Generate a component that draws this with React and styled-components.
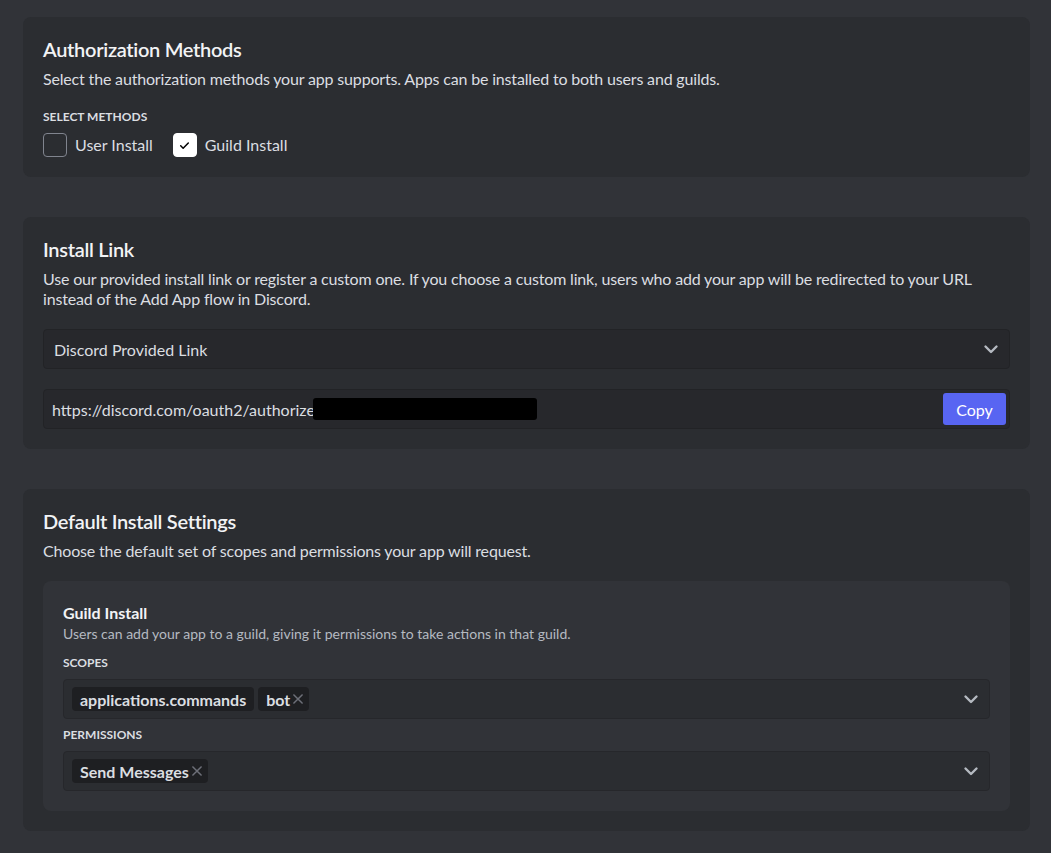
import React from 'react';
import styled, { createGlobalStyle } from 'styled-components';

const GlobalStyle = createGlobalStyle`
  html, body {
    margin: 0;
    background: #313338;
  }
  body {
    font-family: "Lato", "Noto Sans", sans-serif;
    color: #dbdee1;
  }
`;

const Page = styled.div`
  padding: 17px 21px 23px 23px;
  display: flex;
  flex-direction: column;
  gap: 40px;
`;

const Card = styled.section`
  background: #2b2d31;
  border-radius: 8px;
  padding: 20px;
`;

const Title = styled.h2`
  margin: 0 0 8px;
  font-size: 20px;
  line-height: 24px;
  font-weight: 600;
  letter-spacing: -0.3px;
  color: #f2f3f5;
`;

const Desc = styled.p`
  margin: 0;
  font-size: 16px;
  line-height: 20px;
  letter-spacing: -0.17px;
  color: #dbdee1;
`;

const Label = styled.div`
  font-size: 12px;
  line-height: 16px;
  font-weight: 700;
  text-transform: uppercase;
  color: #dbdee1;
  margin: ${p => p.$top || 0}px 0 ${p => p.$bottom || 8}px;
`;

const CheckRow = styled.div`
  display: flex;
  align-items: center;
  gap: 20px;
`;

const CheckItem = styled.label`
  display: flex;
  align-items: center;
  gap: 8px;
  font-size: 16px;
  line-height: 24px;
  color: #dbdee1;
`;

const Box = styled.span`
  width: 24px;
  height: 24px;
  box-sizing: border-box;
  border-radius: 4px;
  border: 1px solid ${p => (p.$checked ? '#ffffff' : '#80848e')};
  background: ${p => (p.$checked ? '#ffffff' : 'transparent')};
  display: flex;
  align-items: center;
  justify-content: center;
`;

const Field = styled.div`
  display: flex;
  align-items: center;
  box-sizing: border-box;
  height: 40px;
  background: ${p => (p.$nested ? '#2b2d31' : '#27282c')};
  border: 1px solid ${p => (p.$nested ? '#26272b' : '#222326')};
  border-radius: 4px;
  padding: ${p => p.$pad || '0 6px 0 10px'};
  margin-top: ${p => p.$top || 0}px;
  gap: 4px;
  font-size: 16px;
  color: #dbdee1;
`;

const Grow = styled.div`
  flex: 1;
  display: flex;
  align-items: center;
  gap: 4px;
  white-space: nowrap;
`;

const Redacted = styled.span`
  display: inline-block;
  width: 224px;
  height: 22px;
  background: #000;
  border-radius: 3px;
  margin-left: -13px;
`;

const CopyButton = styled.button`
  width: 63px;
  height: 32px;
  border: 0;
  border-radius: 3px;
  background: #5865f2;
  color: #fff;
  font-family: inherit;
  font-size: 16px;
  padding-bottom: 1px;
`;

const Inner = styled.div`
  background: #313338;
  border-radius: 8px;
  padding: 22px 20px 20px;
  margin-top: 20px;
`;

const SubTitle = styled.h3`
  margin: 0;
  font-size: 16px;
  line-height: 20px;
  font-weight: 700;
  color: #f2f3f5;
`;

const SmallDesc = styled.p`
  margin: 2px 0 0;
  font-size: 14px;
  line-height: 18px;
  color: #b5bac1;
`;

const Chip = styled.span`
  display: inline-flex;
  align-items: center;
  height: 24px;
  padding: 0 ${p => (p.$removable ? 4 : 8)}px 0 8px;
  border-radius: 4px;
  background: #1e1f22;
  font-size: 16px;
  font-weight: 700;
  color: #dbdee1;
  gap: 1px;
`;

const Chevron = () => (
  <svg width="24" height="24" viewBox="0 0 24 24" fill="none">
    <path d="M6.5 9.5l5.5 5.5 5.5-5.5" stroke="#b5bac1" strokeWidth="2.4" strokeLinecap="round" strokeLinejoin="round" />
  </svg>
);

const Cross = () => (
  <svg width="14" height="14" viewBox="0 0 24 24">
    <path d="M5 5l14 14M19 5L5 19" stroke="#6d6f78" strokeWidth="2.6" strokeLinecap="round" />
  </svg>
);

const Tag = ({ children, removable }) => (
  <Chip $removable={removable}>
    {children}
    {removable && <Cross />}
  </Chip>
);

export default function App() {
  return (
    <>
      <GlobalStyle />
      <Page>
        <Card>
          <Title>Authorization Methods</Title>
          <Desc>Select the authorization methods your app supports. Apps can be installed to both users and guilds.</Desc>
          <Label $top={20}>Select Methods</Label>
          <CheckRow>
            <CheckItem>
              <Box />
              User Install
            </CheckItem>
            <CheckItem>
              <Box $checked>
                <svg width="13" height="13" viewBox="0 0 24 24" fill="none">
                  <path d="M5 12.5l4.5 4.5L19 7.5" stroke="#000" strokeWidth="2.8" strokeLinecap="round" strokeLinejoin="round" />
                </svg>
              </Box>
              Guild Install
            </CheckItem>
          </CheckRow>
        </Card>

        <Card>
          <Title>Install Link</Title>
          <Desc>
            Use our provided install link or register a custom one. If you choose a custom link, users who add your app will be redirected to your URL instead of the Add App flow in Discord.
          </Desc>
          <Field $top={20}>
            <Grow>Discord Provided Link</Grow>
            <Chevron />
          </Field>
          <Field $top={20} $pad="0 3px 0 8px">
            <Grow>
              https://discord.com/oauth2/authorize?
              <Redacted />
            </Grow>
            <CopyButton>Copy</CopyButton>
          </Field>
        </Card>

        <Card>
          <Title>Default Install Settings</Title>
          <Desc>Choose the default set of scopes and permissions your app will request.</Desc>
          <Inner>
            <SubTitle>Guild Install</SubTitle>
            <SmallDesc>Users can add your app to a guild, giving it permissions to take actions in that guild.</SmallDesc>
            <Label $top={12} $bottom={8}>Scopes</Label>
            <Field $nested $pad="0 6px 0 8px">
              <Grow>
                <Tag>applications.commands</Tag>
                <Tag removable>bot</Tag>
              </Grow>
              <Chevron />
            </Field>
            <Label $top={8}>Permissions</Label>
            <Field $nested $pad="0 6px 0 8px">
              <Grow>
                <Tag removable>Send Messages</Tag>
              </Grow>
              <Chevron />
            </Field>
          </Inner>
        </Card>
      </Page>
    </>
  );
}
